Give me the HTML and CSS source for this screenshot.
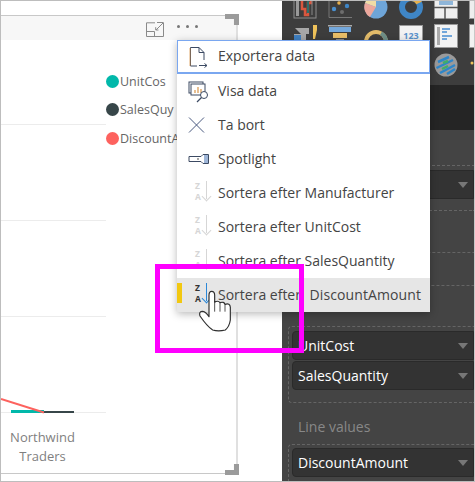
FILE: index.html
```html
<!DOCTYPE html>
<html lang="sv">
<head>
<meta charset="utf-8">
<title>Sortera efter</title>
<link rel="stylesheet" href="styles.css">
</head>
<body>
<div class="page">
  <main class="canvas">
    <section class="visual">
      <header class="visual-head">
        <svg class="focus-icon" viewBox="0 0 18 15" width="18" height="15"><path d="M.5 5V14.500H17.500V1M.5 9.500H8.500V14.500M.5 5V.8H9M11 .5H17.500M17.300.7L10 8M12.500 8H9.700V5.200" fill="none" stroke="#8a8a8a" stroke-width="1"/></svg>
        <div class="dots"><i></i><i></i><i></i></div>
      </header>
      <div class="visual-body">
        <div class="plot">
          <div class="grid first"></div>
          <div class="grid"></div>
          <div class="grid"></div>
          <div class="grid"></div>
          <svg class="series" viewBox="0 0 80 16" width="80" height="16"><rect x="10" y="12" width="33" height="3" fill="#01b8aa"/><rect x="43" y="13" width="30" height="2" fill="#374649"/><path d="M0 1L43 14.500" stroke="#fd625e" stroke-width="2" fill="none"/></svg>
          <div class="axis-label">Northwind Traders</div>
        </div>
        <ul class="legend">
          <li><i class="dot teal"></i><span>UnitCos</span></li>
          <li><i class="dot slate"></i><span>SalesQuy</span></li>
          <li><i class="dot coral"></i><span>DiscountAmount</span></li>
        </ul>
      </div>
      <i class="handle tr"></i>
      <i class="handle br"></i>
    </section>
  </main>

  <aside class="panel">
    <div class="viz-icons">
      <svg viewBox="0 0 24 24"><rect x="1" y="1" width="22" height="22" fill="none" stroke="#8d8d8d" stroke-width="1"/><rect x="3" y="1" width="3" height="20" fill="#999"/><path d="M9 4V14H12V20H15V8H18V2" fill="none" stroke="#d9573f" stroke-width="2.500"/><path d="M15 3V18" stroke="#2f6e6a" stroke-width="2"/><path d="M19 3V20" stroke="#888" stroke-width="1"/></svg>
      <svg viewBox="0 0 24 24"><path d="M1 1V22.500H24" fill="none" stroke="#777" stroke-width="1"/><circle cx="6" cy="14" r="2.200" fill="#4a90d0"/><circle cx="11" cy="8" r="1.800" fill="#e8b04c"/><circle cx="14" cy="17" r="2" fill="#6d6d6d"/><circle cx="19" cy="11" r="2.200" fill="#3f86c6"/><circle cx="10" cy="2" r="1.500" fill="#e08a7a"/></svg>
      <svg viewBox="0 0 24 24"><circle cx="12" cy="12" r="11.500" fill="#6ea5d8"/><path d="M12 12L1 8A11.500 11.500 0 0 1 12 .5Z" fill="#f0dca6"/><path d="M12 12L1 8A11.500 11.500 0 0 0 6 22Z" fill="#eca79c"/></svg>
      <svg viewBox="0 0 24 24"><circle cx="12" cy="12" r="9" fill="none" stroke="#3f86c6" stroke-width="6"/><path d="M12 3A9 9 0 0 1 20 8" fill="none" stroke="#e8b04c" stroke-width="6"/></svg>
      <svg viewBox="0 0 24 24"><rect x=".5" y=".5" width="23" height="23" fill="#eee" stroke="#999"/><rect x="5" y="3" width="14" height="7" fill="#8fb6d9"/><path d="M0 12.500H24M11 12.500V24" stroke="#555" stroke-width="1.500"/></svg>
      <svg viewBox="0 0 24 24"><rect x=".5" y=".5" width="23" height="23" fill="#eee" stroke="#999"/></svg>

      <svg viewBox="0 0 24 24"><path d="M2 4H16V10H13V18H8V20H1V10H8Z" fill="#a7a7a7"/><path d="M1 11H8V22H1Z" fill="#3f7fc0"/><path d="M20 1H24V6L22 15H20Z" fill="#efc25a"/><rect x="19.500" y="18" width="3" height="3" fill="#efc25a"/></svg>
      <svg viewBox="0 0 24 24"><rect x="0" y="1" width="24" height="1.500" fill="#aaa"/><rect x="1" y="3" width="22" height="5" fill="#74a8dc"/><rect x="5" y="9" width="14" height="5" fill="#e9be68"/><rect x="8" y="15" width="8" height="5" fill="#888"/></svg>
      <svg viewBox="0 0 24 24"><path d="M2 18A10 10 0 0 1 22 18" fill="none" stroke="#e2bb6a" stroke-width="4"/><path d="M17 9.300A10 10 0 0 1 22 18" fill="none" stroke="#6e8f88" stroke-width="4"/></svg>
      <svg viewBox="0 0 24 24"><rect x=".5" y="1.500" width="23" height="21" fill="#f2f2f2" stroke="#999"/><text class="card-num" x="12" y="15" text-anchor="middle">123</text></svg>
      <svg viewBox="0 0 24 24"><rect x=".5" y=".5" width="23" height="23" fill="#f2f2f2" stroke="#999"/><rect x="3" y="3" width="3" height="18" fill="#aaa"/><path d="M8 5H16M8 8H13M8 12H18M8 15H13" stroke="#72a6da" stroke-width="2"/></svg>
      <svg viewBox="0 0 24 24"><rect x=".5" y=".5" width="23" height="23" fill="#f2f2f2" stroke="#999"/></svg>

      <svg class="hidden-icon" viewBox="0 0 24 24"></svg><svg class="hidden-icon" viewBox="0 0 24 24"></svg><svg class="hidden-icon" viewBox="0 0 24 24"></svg><svg class="hidden-icon" viewBox="0 0 24 24"></svg>
      <svg viewBox="0 0 24 24"><circle cx="12" cy="12" r="11.500" fill="#9a9a9a"/><path d="M4 9L15 4M2.500 15L19 7M6 20L21 12M13 21L21 16" stroke="#2e86c9" stroke-width="2.500"/><path d="M9 10L14 8M8 16L14 13" stroke="#3fae6a" stroke-width="2.500"/></svg>
      <svg viewBox="0 0 24 24"><circle cx="3" cy="10" r="1.500" fill="#efc25a"/></svg>
    </div>
    <div class="band"></div>
    <div class="fields">
      <div class="well w1"><div class="drop"><span></span><b></b></div></div>
      <div class="well w2"></div>
      <div class="well w3">
        <div class="drop"><span>UnitCost</span><b></b></div>
        <div class="drop"><span>SalesQuantity</span><b></b></div>
      </div>
      <div class="field-label">Line values</div>
      <div class="well w4"><div class="drop"><span>DiscountAmount</span><b></b></div></div>
    </div>
  </aside>

  <nav class="menu">
    <div class="item focus">
      <svg viewBox="0 0 22 24" class="ico"><path d="M2.500 21V2.500H11L16 7.500V15M11 2.500V7.500H16M2.500 21H9" fill="none" stroke="#3c4a63" stroke-width="1"/><path d="M2 3V21" stroke="#d8954a" stroke-width=".8"/><path d="M11 20.500H19M16.500 18.500L19 20.500L16.500 22.500" fill="none" stroke="#3c4a63" stroke-width="1"/></svg>
      <span>Exportera data</span>
    </div>
    <div class="item">
      <svg viewBox="0 0 22 24" class="ico"><rect x="1" y="3" width="14" height="11" fill="none" stroke="#3c4a63"/><rect x="3" y="5" width="14" height="11" fill="#fff" stroke="#3c4a63"/><path d="M7 14V11M10 14V8M13 14V10" stroke="#d8954a" stroke-width="1.200"/><circle cx="16" cy="16" r="3.500" fill="#fff" stroke="#3c4a63"/><path d="M13.500 18.500L9 23" stroke="#3c4a63" stroke-width="1.200"/></svg>
      <span>Visa data</span>
    </div>
    <div class="item">
      <svg viewBox="0 0 22 24" class="ico"><path d="M1 4.500L16 19.500M16 4.500L1 19.500" stroke="#4a5a80" stroke-width="1"/></svg>
      <span>Ta bort</span>
    </div>
    <div class="item">
      <svg viewBox="0 0 22 24" class="ico"><path d="M1 9.500H13L15 7.500H20.500V16.500H15L13 14.500H1Z" fill="#fff" stroke="#3c4a63"/><path d="M17 8V16M19 8V16" stroke="#3f6db0" stroke-width="1"/><path d="M9 12H11" stroke="#8a8a8a" stroke-width="1.500"/></svg>
      <span>Spotlight</span>
    </div>
    <div class="item sort">
      <div class="sort-ico"><em>Z</em><em>A</em></div>
      <span>Sortera efter Manufacturer</span>
    </div>
    <div class="item sort">
      <div class="sort-ico"><em>Z</em><em>A</em></div>
      <span>Sortera efter UnitCost</span>
    </div>
    <div class="item sort">
      <div class="sort-ico"><em>Z</em><em>A</em></div>
      <span>Sortera efter SalesQuantity</span>
    </div>
    <div class="item sort active">
      <i class="marker"></i>
      <div class="sort-ico"><em>Z</em><em>A</em></div>
      <span>Sortera efter <strong class="wide-gap">DiscountAmount</strong></span>
    </div>
  </nav>

  <div class="callout"></div>
  <svg class="cursor" viewBox="141 354 108 132" width="36" height="44"><path d="M177 440V376Q177 364 185 364Q194 364 194 376V397Q204 390 210 398Q222 394 225 403Q240 398 241 412L241 450Q238 470 226 480Q205 485 188 480Q172 470 150 438Q146 424 158 424Q168 426 177 440Z" fill="#fff" stroke="#2f2f2f" stroke-width="3.500" stroke-linejoin="round"/><path d="M194 397V425M210 398V425M225 403V425" stroke="#2f2f2f" stroke-width="2.500" fill="none"/></svg>
</div>
</body>
</html>
```
FILE: styles.css
```css
* { box-sizing: border-box; }
html, body { margin: 0; padding: 0; }
body { width: 475px; height: 482px; overflow: hidden; font-family: "Open Sans", "Noto Sans", sans-serif; background: #fff; }

.page { position: relative; display: flex; width: 475px; height: 482px; overflow: hidden; border-top: 1px solid #bdbdbd; border-left: 1px solid #bdbdbd; border-bottom: 1px solid #bdbdbd; }

.canvas { width: 281px; flex: none; background: #fff; padding-top: 14px; }
.visual { position: relative; width: 237px; height: 459px; border-top: 1px solid #c8c8c8; border-right: 2px solid #e0e0e0; border-bottom: 1px solid #c8c8c8; }
.visual-head { height: 24px; background: #f7f7f7; display: flex; align-items: center; justify-content: flex-end; padding-right: 38px; gap: 13px; }
.focus-icon { display: block; margin-top: 2px; }
.dots { display: flex; gap: 6px; margin-top: -3px; }
.dots i { width: 3px; height: 3px; border-radius: 50%; background: #777; }

.visual-body { display: flex; }
.plot { position: relative; width: 105px; flex: none; }
.grid { height: 96px; border-bottom: 1px solid #ececec; }
.grid.first { height: 85px; }
.series { position: absolute; left: 0; top: 358px; }
.axis-label { width: 83px; margin-top: 15px; text-align: center; font-size: 13px; line-height: 19px; color: #7f7f7f; }

.legend { list-style: none; margin: 34px 0 0 0; padding: 0; display: flex; flex-direction: column; gap: 14.500px; font-size: 12.500px; color: #666; }
.legend li { display: flex; align-items: center; gap: 1px; height: 14px; white-space: nowrap; }
.dot { width: 13px; height: 13px; border-radius: 50%; flex: none; }
.teal { background: #01b8aa; }
.slate { background: #374649; }
.coral { background: #fd625e; }

.handle { position: absolute; background: #9b9b9b; }
.handle.tr { right: -3px; top: -2px; width: 14px; height: 11px; clip-path: polygon(0 0, 100% 0, 100% 100%, 64% 100%, 64% 45%, 0 45%); }
.handle.br { right: -3px; bottom: -2px; width: 14px; height: 11px; clip-path: polygon(64% 0, 100% 0, 100% 100%, 0 100%, 0 55%, 64% 55%); }

.panel { flex: 1; display: flex; flex-direction: column; background: #444; border-right: 1px solid #c8c8c8; min-width: 0; }
.viz-icons { height: 84px; flex: none; background: #3d3d3d; overflow: hidden; display: grid; grid-template-columns: repeat(6, 24px); column-gap: 11.300px; row-gap: 5px; grid-auto-rows: 24px; padding-left: 11px; align-content: start; }
.viz-icons svg { display: block; width: 24px; height: 24px; margin-top: -6px; }
.card-num { font-family: "Open Sans", sans-serif; font-weight: 700; font-size: 9px; fill: #5a93cc; }
.band { height: 45px; flex: none; background: #252525; }
.fields { flex: 1; padding: 35px 0 0 6px; min-height: 0; }
.well { border: 1px dashed #656565; border-right: 0; border-radius: 4px 0 0 4px; padding: 3px 0 0 3px; }
.w1 { height: 46px; padding-top: 4px; }
.w2 { height: 34px; margin-top: 41px; }
.w3 { height: 77px; margin-top: 40px; padding-top: 4px; }
.w4 { height: 40px; margin-top: 7px; }
.drop { display: flex; align-items: center; justify-content: space-between; height: 29px; background: #333; border: 1px solid #2a2a2a; border-radius: 4px 0 0 4px; padding: 0 5px 0 5px; margin-bottom: 1px; color: #fff; font-size: 14px; }
.drop b { width: 0; height: 0; border-left: 5px solid transparent; border-right: 5px solid transparent; border-top: 6px solid #777; }
.field-label { margin: 14px 0 0 10px; height: 20px; line-height: 20px; font-size: 14px; color: #888; }

.menu { position: absolute; left: 176px; top: 39px; width: 253px; background: #fff; box-shadow: 0 2px 8px rgba(0, 0, 0, .28); }
.item { position: relative; display: flex; align-items: center; height: 34px; padding-left: 11px; gap: 8px; font-size: 14px; color: #444; white-space: nowrap; }
.item > span { margin-top: -2px; }
.item.focus { border: 1px solid #7aa7f0; border-bottom-width: 2px; padding-left: 10px; }
.wide-gap { font-weight: 400; margin-left: 5px; letter-spacing: .1px; }
.ico { display: block; width: 22px; height: 24px; flex: none; }
.sort-ico { position: relative; display: flex; flex-direction: column; justify-content: center; width: 22px; height: 24px; flex: none; padding: 0 0 4px 7px; line-height: 11px; }
.sort-ico em { font-style: normal; font-weight: 700; font-size: 8.500px; color: #d6d6d6; }
.sort-ico::before { content: ""; position: absolute; left: 18px; top: 0; width: 1px; height: 18px; background: #d6d6d6; }
.sort-ico::after { content: ""; position: absolute; left: 15px; top: 12px; width: 6px; height: 6px; border-right: 1px solid #d6d6d6; border-bottom: 1px solid #d6d6d6; transform: rotate(45deg); }
.item.active { background: #e6e6e6; }
.active .sort-ico em { color: #333; }
.active .sort-ico::before { background: #2b88d8; }
.active .sort-ico::after { border-color: #2b88d8; }
.marker { position: absolute; left: 0; top: 5px; width: 5px; height: 20px; background: #f2c811; }

.callout { position: absolute; left: 154px; top: 263px; width: 149px; height: 89px; border: 5px solid #ff00ff; }
.cursor { position: absolute; left: 196px; top: 287px; }
```
